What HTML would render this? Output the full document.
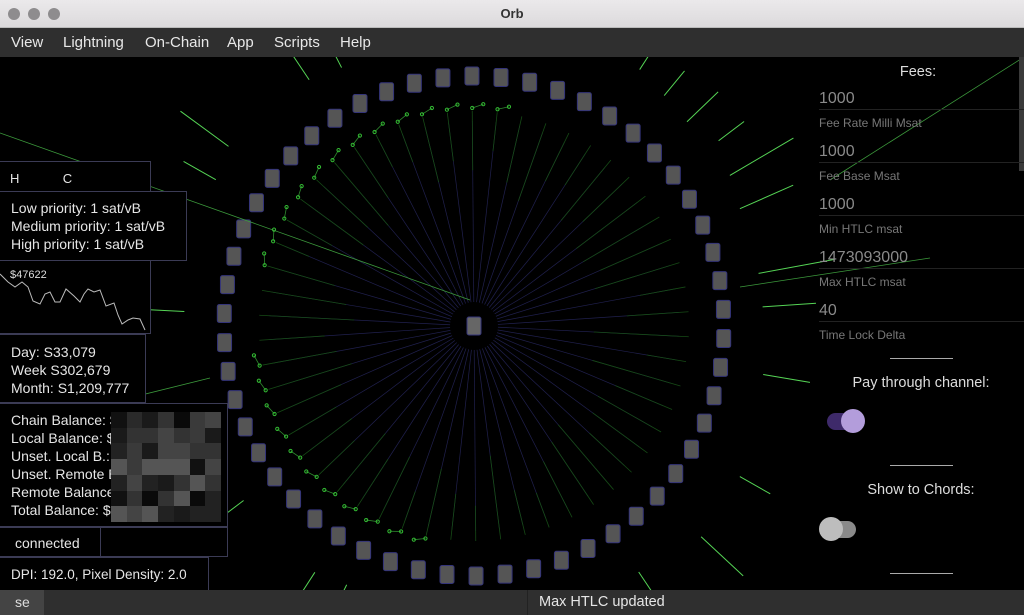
<!DOCTYPE html>
<html><head><meta charset="utf-8">
<style>
*{margin:0;padding:0;box-sizing:border-box}
body{width:1024px;height:615px;background:#000;overflow:hidden;font-family:"Liberation Sans",sans-serif;position:relative}
.title{position:absolute;left:0;top:0;width:1024px;height:28px;background:linear-gradient(#ebe9eb,#dcdadc);border-bottom:1px solid #bbb;text-align:center;font:bold 13px/28px "Liberation Sans",sans-serif;color:#333}
.dot{position:absolute;top:8px;width:12px;height:12px;border-radius:50%;background:#8e8c8e}
.menu{position:absolute;left:0;top:28px;width:1024px;height:29px;background:#2f2f2f;color:#e8e8e8;font-size:15px;line-height:29px}
.menu span{position:absolute;top:0}
svg{position:absolute;left:0;top:57px}
.box{position:absolute;border:1px solid #3b3b55;background:#000;color:#e6e6e6;font-size:14px;line-height:18px;white-space:nowrap}
.f{position:absolute;left:819px;width:205px;border-bottom:1px solid #222}
.f .v{color:#8a8a8a;font-size:16px;line-height:20px}
.f .l{position:absolute;top:27px;color:#777;font-size:12px}
.c{position:absolute;color:#ddd;font-size:14.5px;text-align:center;width:200px}
.dash{position:absolute;left:890px;width:63px;border-top:1px solid #aaa}
</style></head><body>
<div class="title">Orb
<div class="dot" style="left:8px"></div><div class="dot" style="left:28px"></div><div class="dot" style="left:48px"></div></div>
<div class="menu"><span style="left:11px">View</span><span style="left:63px">Lightning</span><span style="left:145px">On-Chain</span><span style="left:227px">App</span><span style="left:274px">Scripts</span><span style="left:340px">Help</span></div>
<svg id="g" width="1024" height="533" viewBox="0 57 1024 533"></svg>

<div class="box" style="left:-1px;top:161px;width:152px;height:173px;padding:8px 10px;font-size:13px">H&nbsp;&nbsp;&nbsp;&nbsp;&nbsp;&nbsp;&nbsp;&nbsp;&nbsp;&nbsp;&nbsp;&nbsp;C
<svg style="position:absolute;left:0;top:100px" width="150" height="72"><polyline fill="none" stroke="#bbb" stroke-width="1" points="0,12 8,20 15,25 22,20 28,25 33,39 40,42 45,32 50,30 55,40 60,40 66,27 74,34 80,40 84,32 88,27 94,30 100,28 106,44 114,41 118,53 122,62 128,58 133,56 140,57 145,68"/></svg>
<div style="position:absolute;left:10px;top:104px;font-size:11px;color:#ddd">$47622</div></div>
<div class="box" style="left:-1px;top:191px;width:188px;height:70px;padding:7px 11px">Low priority: 1 sat/vB<br>Medium priority: 1 sat/vB<br>High priority: 1 sat/vB</div>
<div class="box" style="left:-1px;top:334px;width:147px;height:69px;padding:8px 11px">Day: S33,079<br>Week S302,679<br>Month: S1,209,777</div>
<div class="box" style="left:-1px;top:403px;width:229px;height:124px;padding:7px 11px;overflow:hidden">Chain Balance: $<br>Local Balance: $<br>Unset. Local B.: $<br>Unset. Remote B<br>Remote Balance: $<br>Total Balance: $
<div id="pix" style="position:absolute;left:111px;top:8px;width:110px;height:110px;display:grid;grid-template-columns:repeat(7,1fr);grid-template-rows:repeat(7,1fr)"></div></div>
<div class="box" style="left:-1px;top:527px;width:102px;height:30px;padding:6px 15px">connected</div>
<div class="box" style="left:100px;top:527px;width:128px;height:30px"></div>
<div class="box" style="left:-1px;top:557px;width:210px;height:34px;padding:8px 11px;font-size:13.5px">DPI: 192.0, Pixel Density: 2.0</div>

<div style="position:absolute;left:1019px;top:57px;width:5px;height:114px;background:#3a3a3a"></div>
<div class="c" style="left:818px;top:64px">Fees:</div>
<div class="f" style="top:89px;height:21px"><div class="v">1000</div><div class="l">Fee Rate Milli Msat</div></div>
<div class="f" style="top:142px;height:21px"><div class="v">1000</div><div class="l">Fee Base Msat</div></div>
<div class="f" style="top:195px;height:21px"><div class="v">1000</div><div class="l">Min HTLC msat</div></div>
<div class="f" style="top:248px;height:21px"><div class="v">1473093000</div><div class="l">Max HTLC msat</div></div>
<div class="f" style="top:301px;height:21px"><div class="v">40</div><div class="l">Time Lock Delta</div></div>
<div class="dash" style="top:358px"></div>
<div class="c" style="left:821px;top:375px">Pay through channel:</div>
<div style="position:absolute;left:827px;top:413px;width:30px;height:17px;border-radius:9px;background:#3e2a6a"></div>
<div style="position:absolute;left:841px;top:409px;width:24px;height:24px;border-radius:50%;background:#b39ddb"></div>
<div class="dash" style="top:465px"></div>
<div class="c" style="left:821px;top:482px">Show to Chords:</div>
<div style="position:absolute;left:822px;top:521px;width:34px;height:17px;border-radius:9px;background:#8a8a8a"></div>
<div style="position:absolute;left:819px;top:517px;width:24px;height:24px;border-radius:50%;background:#bdbdbd"></div>
<div class="dash" style="top:573px"></div>

<div style="position:absolute;left:0;top:590px;width:1024px;height:25px;background:#2f2f2f"></div>
<div style="position:absolute;left:0;top:590px;width:44px;height:25px;background:#444;color:#ddd;font-size:14px;line-height:25px;padding-left:15px">se</div>
<div style="position:absolute;left:527px;top:590px;width:497px;height:25px;background:#2f2f2f;color:#e6e6e6;font-size:14.5px;line-height:25px;padding-left:11px;border-left:1px solid #222">Max HTLC updated</div>

<script>
var g=document.getElementById('g'),s='';
var cx=474,cy=326,R=250,N=54;
function rnd(i){var x=Math.sin(i*12.9898)*43758.5453;return x-Math.floor(x);}
for(var i=0;i<N;i++){var a=i/N*2*Math.PI+0.05,c=Math.cos(a),sn=Math.sin(a),deg=(a*180/Math.PI)%360;
 s+='<line x1="'+cx+'" y1="'+cy+'" x2="'+(cx+c*205)+'" y2="'+(cy+sn*205)+'" stroke="#20204e" stroke-width="0.7"/>';
 var r1=120+rnd(i)*60;
 s+='<line x1="'+(cx+c*r1)+'" y1="'+(cy+sn*r1)+'" x2="'+(cx+c*215)+'" y2="'+(cy+sn*215)+'" stroke="#164a16" stroke-width="0.8"/>';
 if(rnd(i+11)<0.55){var r2=285+rnd(i+7)*25,r3=r2+25+rnd(i+3)*60;
 s+='<line x1="'+(cx+c*r2)+'" y1="'+(cy+sn*r2)+'" x2="'+(cx+c*r3)+'" y2="'+(cy+sn*r3)+'" stroke="#55d455" stroke-width="1"/>';}
 if((deg>100&&deg<175)||(deg>190&&deg<280)){var a2=a+0.05,dx=cx+Math.cos(a2)*222,dy=cy+Math.sin(a2)*222,ex=cx+c*218,ey=cy+sn*218;
 s+='<line x1="'+ex+'" y1="'+ey+'" x2="'+dx+'" y2="'+dy+'" stroke="#2f8a2f" stroke-width="0.8"/><circle cx="'+ex+'" cy="'+ey+'" r="1.6" fill="none" stroke="#3b3"/><circle cx="'+dx+'" cy="'+dy+'" r="1.6" fill="none" stroke="#3b3"/>';}
}
s+='<circle cx="'+cx+'" cy="'+cy+'" r="24" fill="#000"/>';
for(var i=0;i<N;i++){var a=i/N*2*Math.PI+0.05,x=cx+Math.cos(a)*R,y=cy+Math.sin(a)*R;
 s+='<rect x="'+(x-7)+'" y="'+(y-9)+'" width="14" height="18" rx="2" fill="#555" stroke="#34347a"/>';}
s+='<rect x="467" y="317" width="14" height="18" rx="2" fill="#666" stroke="#34347a"/>';
s+='<line x1="0" y1="133" x2="470" y2="300" stroke="#3c9a3c" stroke-width="0.8"/><line x1="0" y1="430" x2="210" y2="378" stroke="#3c9a3c" stroke-width="0.8"/><line x1="830" y1="180" x2="1024" y2="57" stroke="#3c9a3c" stroke-width="0.8"/><line x1="740" y1="287" x2="930" y2="258" stroke="#3c9a3c" stroke-width="0.8"/>';
g.innerHTML=s;
var p=document.getElementById('pix'),cols=['#555','#333','#444','#222','#1a1a1a','#111','#0a0a0a','#3a3a3a','#2a2a2a'],h='';
for(var k=0;k<49;k++)h+='<div style="background:'+cols[Math.floor(rnd(k+40)*9)]+'"></div>';p.innerHTML=h;
</script>
</body></html>
